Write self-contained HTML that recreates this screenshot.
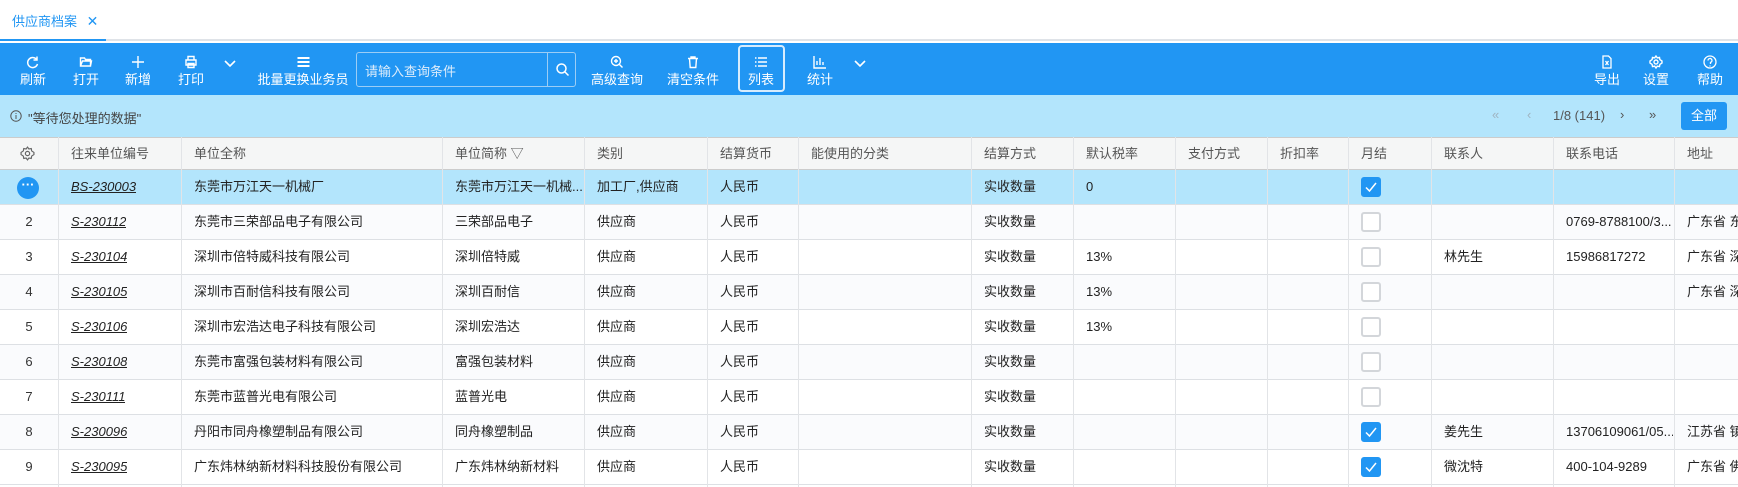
<!DOCTYPE html>
<html><head><meta charset="utf-8"><style>
*{box-sizing:border-box;margin:0;padding:0}
body{width:1738px;height:487px;overflow:hidden;background:#fff;font-family:"Liberation Sans","Noto Sans CJK SC",sans-serif;font-size:13px;color:#333;position:relative}
.abs{position:absolute}
.tab{left:12px;top:11px;color:#2196f3;font-size:13px}
.tbar{left:0;top:43px;width:1738px;height:52px;background:#2196f3}
.btn{position:absolute;top:0;height:52px;color:#fff;text-align:center;transform:translateX(-50%);white-space:nowrap;font-size:13px}
.btn svg{position:absolute;left:50%;top:12px;transform:translateX(-50%)}
.btn span{display:block;margin-top:26px}
.info{left:0;top:95px;width:1738px;height:42px;background:#b3e5fc}
.hdr{left:0;top:137px;width:1738px;height:33px;background:#f5f6f6;border-top:1px solid #ccc;border-bottom:1px solid #ccc}
.row{position:absolute;left:0;width:1738px;height:35px;border-bottom:1px solid #dde0e4}
.cell{position:absolute;top:0;height:100%;line-height:34px;white-space:nowrap;overflow:hidden;color:#333}
.vl{position:absolute;top:137px;width:1px;height:350px;background:#e2e4e7}
.cb{position:absolute;left:1361px;top:7px;width:20px;height:20px;border:2px solid #d3d6da;border-radius:3px;background:#fff}
.cb.on{background:#2196f3;border-color:#2196f3}
u{font-style:italic}
</style></head><body>
<div class="abs tab">供应商档案 <span style="margin-left:6px;font-size:14px">✕</span></div>
<div class="abs" style="left:0;top:39px;width:1738px;height:2px;background:#dfe3e8"></div>
<div class="abs" style="left:0;top:39px;width:106px;height:2px;background:#2196f3"></div>
<div class="abs tbar">
 <div class="btn" style="left:33px"><svg width="14" height="14" viewBox="0 0 14 14" fill="none" stroke="#fff" stroke-width="1.5"><path d="M11 5A5 5 0 1 0 11.5 9"/><path d="M11 1.5V5H7.5"/></svg><span>刷新</span></div>
 <div class="btn" style="left:86px"><svg width="14" height="14" viewBox="0 0 14 14" fill="none" stroke="#fff" stroke-width="1.4"><path d="M1.5 3h4l1 1.5h5V11h-10z M1.5 11l2-5h9l-1 5"/></svg><span>打开</span></div>
 <div class="btn" style="left:138px"><svg width="14" height="14" viewBox="0 0 14 14" stroke="#fff" stroke-width="1.4"><path d="M7 1v12M1 7h12"/></svg><span>新增</span></div>
 <div class="btn" style="left:191px"><svg width="14" height="14" viewBox="0 0 14 14" fill="none" stroke="#fff" stroke-width="1.4"><path d="M4 5V1.5h6V5M2 5h10v5H2zM4 8.5h6v4H4z"/></svg><span>打印</span></div>
 <div class="btn" style="left:230px"><svg style="top:16px" width="14" height="10" viewBox="0 0 14 10" fill="none" stroke="#fff" stroke-width="1.6"><path d="M2 2l5 5 5-5"/></svg></div>
 <div class="btn" style="left:303px"><svg width="14" height="14" viewBox="0 0 14 14" stroke="#fff" stroke-width="2"><path d="M1 3h12M1 7h12M1 11h12"/></svg><span>批量更换业务员</span></div>
 <div class="abs" style="left:356px;top:9px;width:220px;height:35px;border:1px solid #9ccdf5;border-radius:3px"><span style="position:absolute;left:8px;top:8px;color:#dcecfb;font-size:13px">请输入查询条件</span><div style="position:absolute;left:190px;top:0;width:1px;height:33px;background:#9ccdf5"></div><svg style="position:absolute;left:198px;top:9px" width="15" height="15" viewBox="0 0 15 15" fill="none" stroke="#fff" stroke-width="1.5"><circle cx="6.5" cy="6.5" r="4.5"/><path d="M10 10l3.5 3.5"/></svg></div>
 <div class="btn" style="left:617px"><svg width="14" height="14" viewBox="0 0 14 14" fill="none" stroke="#fff" stroke-width="1.4"><circle cx="6" cy="6" r="4.5"/><path d="M9.5 9.5l3 3M6 4v4M4 6h4"/></svg><span>高级查询</span></div>
 <div class="btn" style="left:693px"><svg width="14" height="14" viewBox="0 0 14 14" fill="none" stroke="#fff" stroke-width="1.4"><path d="M2 3.5h10M5 3.5V2h4v1.5M3.5 3.5l.7 9h5.6l.7-9"/></svg><span>清空条件</span></div>
 <div class="abs" style="left:738px;top:2px;width:47px;height:47px;border:2px solid #d7ecfd;border-radius:4px"></div>
 <div class="btn" style="left:761px"><svg width="14" height="14" viewBox="0 0 14 14" stroke="#fff" stroke-width="1.4"><path d="M1 3h1.5M4 3h9M1 7h1.5M4 7h9M1 11h1.5M4 11h9"/></svg><span>列表</span></div>
 <div class="btn" style="left:820px"><svg width="14" height="14" viewBox="0 0 14 14" fill="none" stroke="#fff" stroke-width="1.4"><path d="M1 1v12h12M4 10V6M7 10V3M10 10V7"/></svg><span>统计</span></div>
 <div class="btn" style="left:860px"><svg style="top:16px" width="14" height="10" viewBox="0 0 14 10" fill="none" stroke="#fff" stroke-width="1.6"><path d="M2 2l5 5 5-5"/></svg></div>
 <div class="btn" style="left:1607px"><svg width="14" height="14" viewBox="0 0 14 14" fill="none" stroke="#fff" stroke-width="1.3"><path d="M3 1h5.5L11 3.5V13H3z M5.5 6l3 4M8.5 6l-3 4"/></svg><span>导出</span></div>
 <div class="btn" style="left:1656px"><svg width="14" height="14" viewBox="0 0 14 14" fill="none" stroke="#fff" stroke-width="1.4"><circle cx="7" cy="7" r="2"/><path d="M7 1l1.3 1.8 2.2-.4.4 2.2L13 6v2l-2.1 1.4-.4 2.2-2.2-.4L7 13l-1.3-1.8-2.2.4-.4-2.2L1 8V6l2.1-1.4.4-2.2 2.2.4z"/></svg><span>设置</span></div>
 <div class="btn" style="left:1710px"><svg width="14" height="14" viewBox="0 0 14 14" fill="none" stroke="#fff" stroke-width="1.3"><circle cx="7" cy="7" r="6"/><path d="M5 5.5a2 2 0 1 1 2.5 1.9V9M7 10.5v1"/></svg><span>帮助</span></div>
</div>
<div class="abs info">
 <svg style="position:absolute;left:10px;top:15px" width="12" height="12" viewBox="0 0 12 12" fill="none" stroke="#555" stroke-width="1"><circle cx="6" cy="6" r="5.2"/><path d="M6 5v4M6 3v1"/></svg>
 <span style="position:absolute;left:28px;top:13px;color:#444;font-size:13px">"等待您处理的数据"</span>
 <span style="position:absolute;left:1492px;top:12px;color:#9fb3c0">«</span>
 <span style="position:absolute;left:1527px;top:12px;color:#9fb3c0">‹</span>
 <span style="position:absolute;left:1553px;top:13px;color:#555">1/8 (141)</span>
 <span style="position:absolute;left:1620px;top:12px;color:#555">›</span>
 <span style="position:absolute;left:1649px;top:12px;color:#555">»</span>
 <div style="position:absolute;left:1681px;top:7px;width:46px;height:28px;background:#2196f3;border-radius:3px;color:#fff;text-align:center;line-height:28px">全部</div>
</div>
<div class="abs hdr"></div>
<svg class="abs" style="left:20px;top:146px" width="15" height="15" viewBox="0 0 14 14" fill="none" stroke="#666" stroke-width="1.1"><circle cx="7" cy="7" r="2"/><path d="M7 1l1.3 1.8 2.2-.4.4 2.2L13 6v2l-2.1 1.4-.4 2.2-2.2-.4L7 13l-1.3-1.8-2.2.4-.4-2.2L1 8V6l2.1-1.4.4-2.2 2.2.4z"/></svg>
<div id="hd"></div>
<div id="rows"></div>
<script>
const cols=[58,181,442,584,707,798,971,1073,1175,1267,1348,1431,1553,1674];
const heads=["往来单位编号","单位全称","单位简称 ▽","类别","结算货币","能使用的分类","结算方式","默认税率","支付方式","折扣率","月结","联系人","联系电话","地址"];
let h='';
heads.forEach((t,i)=>{h+=`<div class="cell" style="top:137px;height:33px;line-height:33px;left:${cols[i]+13}px;color:#555">${t}</div>`});
cols.forEach(x=>{h+=`<div class="vl" style="left:${x}px"></div>`});
document.getElementById('hd').innerHTML=h;
const data=[
["BS-230003","东莞市万江天一机械厂","东莞市万江天一机械...","加工厂,供应商","人民币","","实收数量","0","","",1,"","",""],
["S-230112","东莞市三荣部品电子有限公司","三荣部品电子","供应商","人民币","","实收数量","","","",0,"","0769-8788100/3...","广东省 东"],
["S-230104","深圳市倍特威科技有限公司","深圳倍特威","供应商","人民币","","实收数量","13%","","",0,"林先生","15986817272","广东省 深"],
["S-230105","深圳市百耐信科技有限公司","深圳百耐信","供应商","人民币","","实收数量","13%","","",0,"","","广东省 深"],
["S-230106","深圳市宏浩达电子科技有限公司","深圳宏浩达","供应商","人民币","","实收数量","13%","","",0,"","",""],
["S-230108","东莞市富强包装材料有限公司","富强包装材料","供应商","人民币","","实收数量","","","",0,"","",""],
["S-230111","东莞市蓝普光电有限公司","蓝普光电","供应商","人民币","","实收数量","","","",0,"","",""],
["S-230096","丹阳市同舟橡塑制品有限公司","同舟橡塑制品","供应商","人民币","","实收数量","","","",1,"姜先生","13706109061/05...","江苏省 镇"],
["S-230095","广东炜林纳新材料科技股份有限公司","广东炜林纳新材料","供应商","人民币","","实收数量","","","",1,"微沈特","400-104-9289","广东省 佛"]];
let r='';
data.forEach((d,i)=>{
 const top=170+i*35;const bg=i==0?'#b3e5fc':(i%2?'#fafbfd':'#fff');
 r+=`<div class="row" style="top:${top}px;background:${bg}">`;
 if(i==0) r+=`<div style="position:absolute;left:17px;top:7px;width:22px;height:22px;border-radius:50%;background:#2196f3;color:#fff;text-align:center;line-height:16px;font-weight:bold">···</div>`;
 else r+=`<div class="cell" style="left:0;width:58px;text-align:center">${i+1}</div>`;
 d.forEach((v,j)=>{
  if(j==10){r+=`<div class="cb${v?' on':''}">${v?'<svg width="16" height="16" viewBox="0 0 16 16" fill="none" stroke="#fff" stroke-width="1.5" style="position:absolute;left:0;top:0"><path d="M3 8.5l3.5 3.5 6.5-8"/></svg>':''}</div>`;return;}
  if(!v)return;
  const t=j==0?`<u style="color:#222">${v}</u>`:v;
  r+=`<div class="cell" style="left:${cols[j]+13}px;max-width:${(cols[j+1]||1760)-cols[j]-14}px;color:#222">${t}</div>`;
 });
 r+='</div>';
});
cols.forEach(x=>{r+=`<div class="vl" style="left:${x}px;z-index:2"></div>`});
document.getElementById('rows').innerHTML=r;
</script>
</body></html>
